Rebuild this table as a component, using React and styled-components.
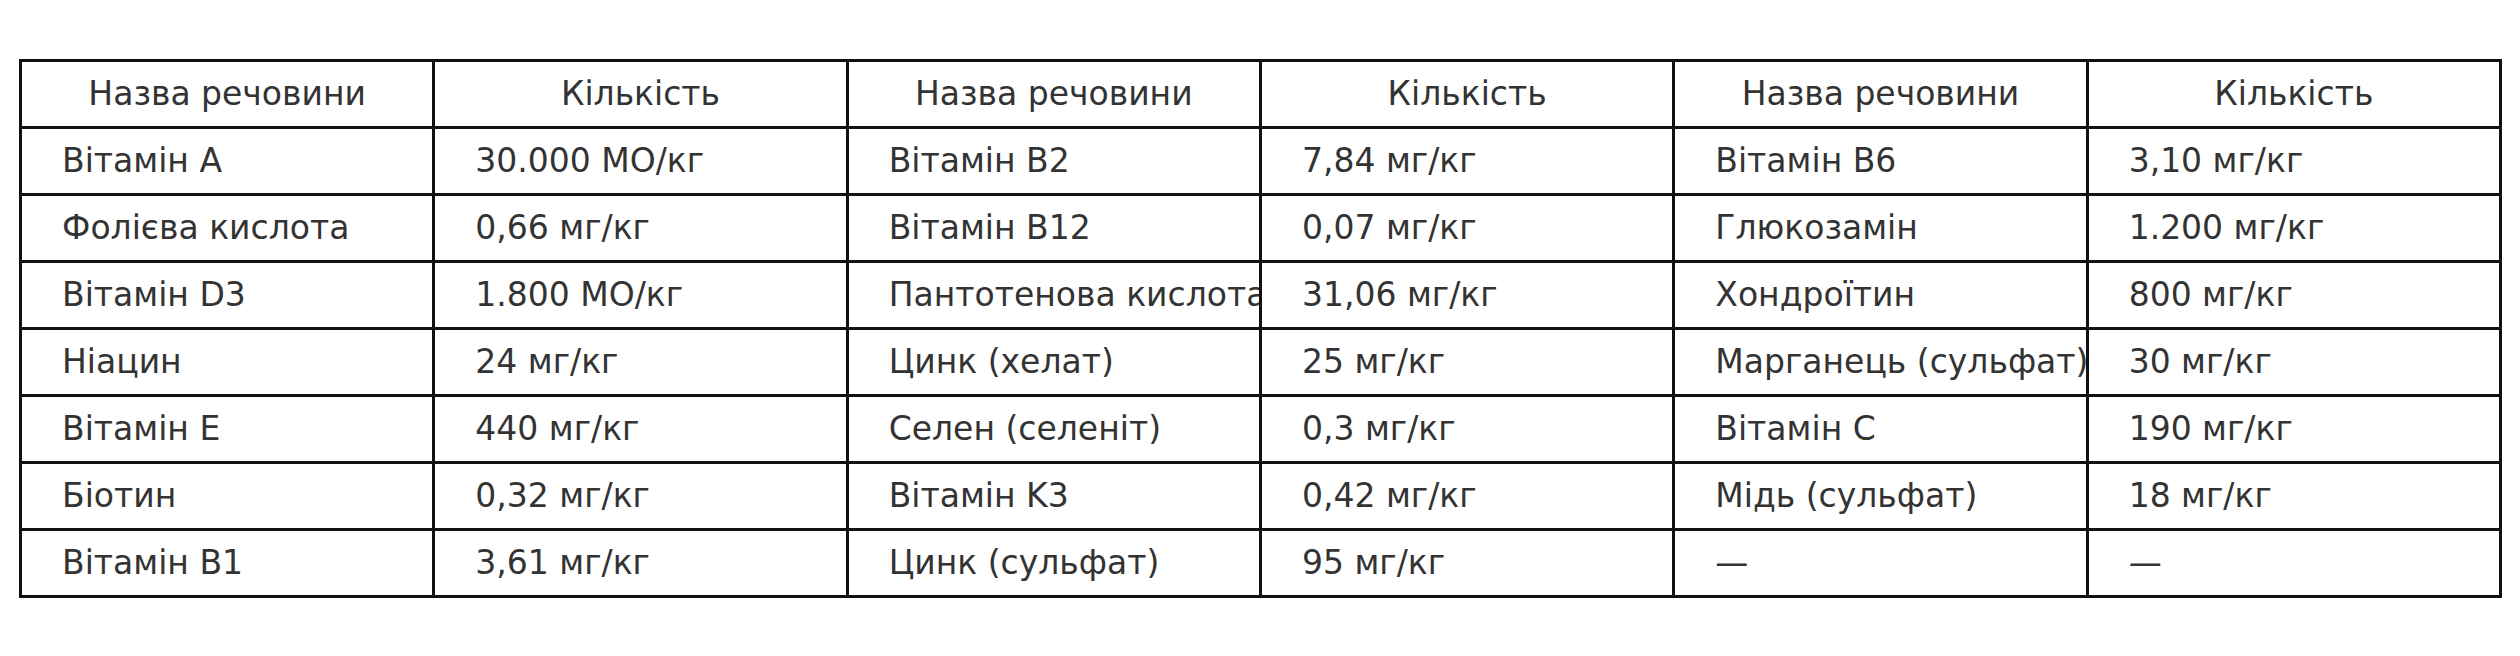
import React from 'react';
import styled, { createGlobalStyle } from 'styled-components';

const GlobalStyle = createGlobalStyle`
  body {
    margin: 0;
    background: #ffffff;
    font-family: "DejaVu Sans", "Liberation Sans", sans-serif;
  }
`;

const rows = [
  ['Вітамін A', '30.000 МО/кг', 'Вітамін B2', '7,84 мг/кг', 'Вітамін B6', '3,10 мг/кг'],
  ['Фолієва кислота', '0,66 мг/кг', 'Вітамін B12', '0,07 мг/кг', 'Глюкозамін', '1.200 мг/кг'],
  ['Вітамін D3', '1.800 МО/кг', 'Пантотенова кислота', '31,06 мг/кг', 'Хондроїтин', '800 мг/кг'],
  ['Ніацин', '24 мг/кг', 'Цинк (хелат)', '25 мг/кг', 'Марганець (сульфат)', '30 мг/кг'],
  ['Вітамін E', '440 мг/кг', 'Селен (селеніт)', '0,3 мг/кг', 'Вітамін C', '190 мг/кг'],
  ['Біотин', '0,32 мг/кг', 'Вітамін K3', '0,42 мг/кг', 'Мідь (сульфат)', '18 мг/кг'],
  ['Вітамін B1', '3,61 мг/кг', 'Цинк (сульфат)', '95 мг/кг', '—', '—'],
];

const headers = ['Назва речовини', 'Кількість', 'Назва речовини', 'Кількість', 'Назва речовини', 'Кількість'];

const App = () => {
  return (
    <Page>
      <GlobalStyle />
      <Table>
        <thead>
          <tr>
            {headers.map((h, i) => (
              <HeadCell key={i}>{h}</HeadCell>
            ))}
          </tr>
        </thead>
        <tbody>
          {rows.map((r, i) => (
            <tr key={i}>
              {r.map((c, j) => (
                <Cell key={j}>{c}</Cell>
              ))}
            </tr>
          ))}
        </tbody>
      </Table>
    </Page>
  );
};

const Page = styled.div`
  padding: 59px 19px 60px 19px;
`;

const Table = styled.table`
  width: 2483px;
  border-collapse: collapse;
  table-layout: fixed;
  color: #333333;
  font-size: 33px;
  line-height: 1.2;
`;

const HeadCell = styled.th`
  border: 3px solid #111111;
  height: 64px;
  padding: 0 10px;
  font-weight: normal;
  text-align: center;
  white-space: nowrap;
  overflow: hidden;
`;

const Cell = styled.td`
  border: 3px solid #111111;
  height: 64px;
  padding: 0 40px;
  text-align: left;
  white-space: nowrap;
  overflow: hidden;
`;

export default App;
